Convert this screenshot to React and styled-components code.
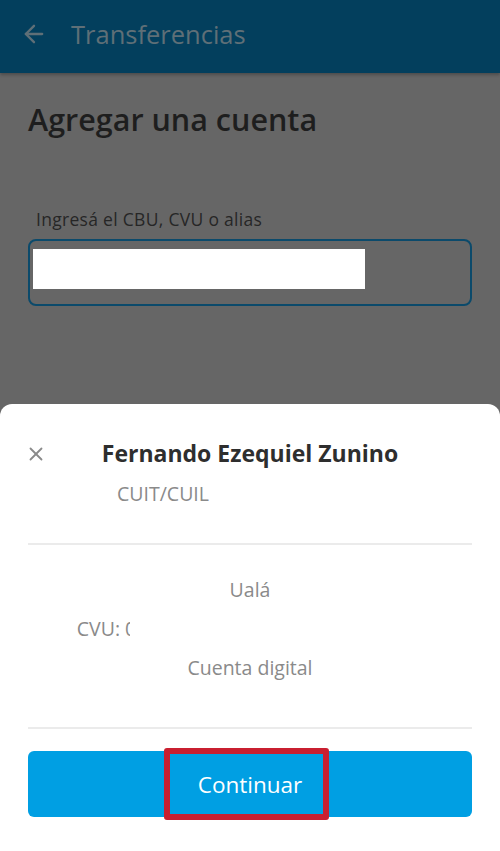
import styled, { createGlobalStyle } from 'styled-components';
import { FiArrowLeft, FiX } from 'react-icons/fi';

const GlobalStyle = createGlobalStyle`
  html, body {
    margin: 0;
    padding: 0;
    background: #666666;
    font-family: 'Open Sans', 'Liberation Sans', sans-serif;
  }
`;

const App = () => {
  return (
    <>
      <GlobalStyle />
      <Page>
        <Header>
          <BackButton type="button" aria-label="Volver">
            <FiArrowLeft />
          </BackButton>
          <HeaderTitle>Transferencias</HeaderTitle>
        </Header>

        <Content>
          <Title>Agregar una cuenta</Title>
          <Label>Ingresá el CBU, CVU o alias</Label>
          <InputBox>
            <Redacted $width={332} $height={40} />
          </InputBox>
        </Content>

        <Sheet>
          <SheetHead>
            <CloseButton type="button" aria-label="Cerrar">
              <FiX />
            </CloseButton>
            <Name>Fernando Ezequiel Zunino</Name>
          </SheetHead>
          <InfoLine $top={20}>
            CUIT/CUIL
            <Redacted $width={169} $height={20} $offset={5} />
          </InfoLine>
          <Divider $top={38} />
          <Details>
            <InfoLine>Ualá</InfoLine>
            <InfoLine>
              CVU: 0
              <Redacted $width={293} $height={24} $offset={-6} />
            </InfoLine>
            <InfoLine>Cuenta digital</InfoLine>
          </Details>
          <Divider />
          <PrimaryButton type="button">
            <Highlight>Continuar</Highlight>
          </PrimaryButton>
        </Sheet>
      </Page>
    </>
  );
};

const Page = styled.div`
  display: flex;
  flex-direction: column;
  height: 851px;
  background: #666666;
  overflow: hidden;
`;

const Header = styled.header`
  display: flex;
  align-items: center;
  gap: 23px;
  height: 73px;
  padding: 0 20px 5px;
  box-sizing: border-box;
  background: #033f5d;
  box-shadow: 0 2px 3px rgba(0, 0, 0, 0.25);
  flex-shrink: 0;
`;

const BackButton = styled.button`
  display: flex;
  align-items: center;
  padding: 0;
  border: none;
  background: none;
  color: #5f6f77;
  font-size: 28px;
`;

const HeaderTitle = styled.h1`
  margin: 0;
  font-size: 25.5px;
  font-weight: 400;
  color: #5f6f77;
`;

const Content = styled.main`
  display: flex;
  flex-direction: column;
  padding: 0 28px;
`;

const Title = styled.h2`
  margin: 0;
  padding-top: 27px;
  font-size: 30.5px;
  font-weight: 600;
  line-height: 38px;
  color: #1e1e1e;
`;

const Label = styled.label`
  margin: 70px 0 0 8px;
  font-size: 17.5px;
  letter-spacing: 0.3px;
  line-height: 22px;
  color: #262626;
`;

const InputBox = styled.div`
  display: flex;
  align-items: flex-start;
  margin-top: 9px;
  height: 67px;
  box-sizing: border-box;
  padding: 8px 3px;
  border: 2px solid #0b4a6b;
  border-radius: 8px;
`;

const Redacted = styled.span`
  display: inline-block;
  width: ${(p) => p.$width}px;
  height: ${(p) => p.$height}px;
  margin-left: ${(p) => p.$offset || 0}px;
  background: #ffffff;
  vertical-align: middle;
`;

const Sheet = styled.section`
  display: flex;
  flex-direction: column;
  margin-top: auto;
  height: 447px;
  box-sizing: border-box;
  padding: 33px 28px 34px;
  background: #ffffff;
  border-radius: 12px 12px 0 0;
  flex-shrink: 0;
`;

const SheetHead = styled.div`
  display: grid;
  grid-template-columns: 1fr auto 1fr;
  align-items: center;
  height: 26px;
`;

const CloseButton = styled.button`
  display: flex;
  align-items: center;
  justify-self: start;
  padding: 0;
  margin-left: -3px;
  margin-top: 1px;
  border: none;
  background: none;
  color: #8a8a8a;
  font-size: 22px;
`;

const Name = styled.div`
  font-size: 23px;
  font-weight: 700;
  color: #2e2e2e;
  white-space: nowrap;
`;

const InfoLine = styled.div`
  margin-top: ${(p) => p.$top || 0}px;
  height: 22px;
  text-align: center;
  font-size: 19.5px;
  line-height: 22px;
  color: #8a8a8a;
  white-space: nowrap;
`;

const Details = styled.div`
  display: flex;
  flex-direction: column;
  gap: 17px;
  padding: 34px 0 48px;
`;

const Divider = styled.hr`
  margin: ${(p) => p.$top || 0}px 0 0;
  border: none;
  border-top: 2px solid #ebebeb;
`;

const PrimaryButton = styled.button`
  display: flex;
  justify-content: center;
  align-items: center;
  margin-top: 22px;
  height: 66px;
  padding: 0;
  border: none;
  border-radius: 6px;
  background: #009fe3;
  color: #ffffff;
  font-family: inherit;
  font-size: 22.5px;
`;

const Highlight = styled.span`
  display: flex;
  align-items: center;
  justify-content: center;
  width: 165px;
  height: 72px;
  box-sizing: border-box;
  margin-right: 7px;
  padding-left: 7px;
  border: 6px solid #c91f30;
  border-radius: 3px;
`;

export default App;
